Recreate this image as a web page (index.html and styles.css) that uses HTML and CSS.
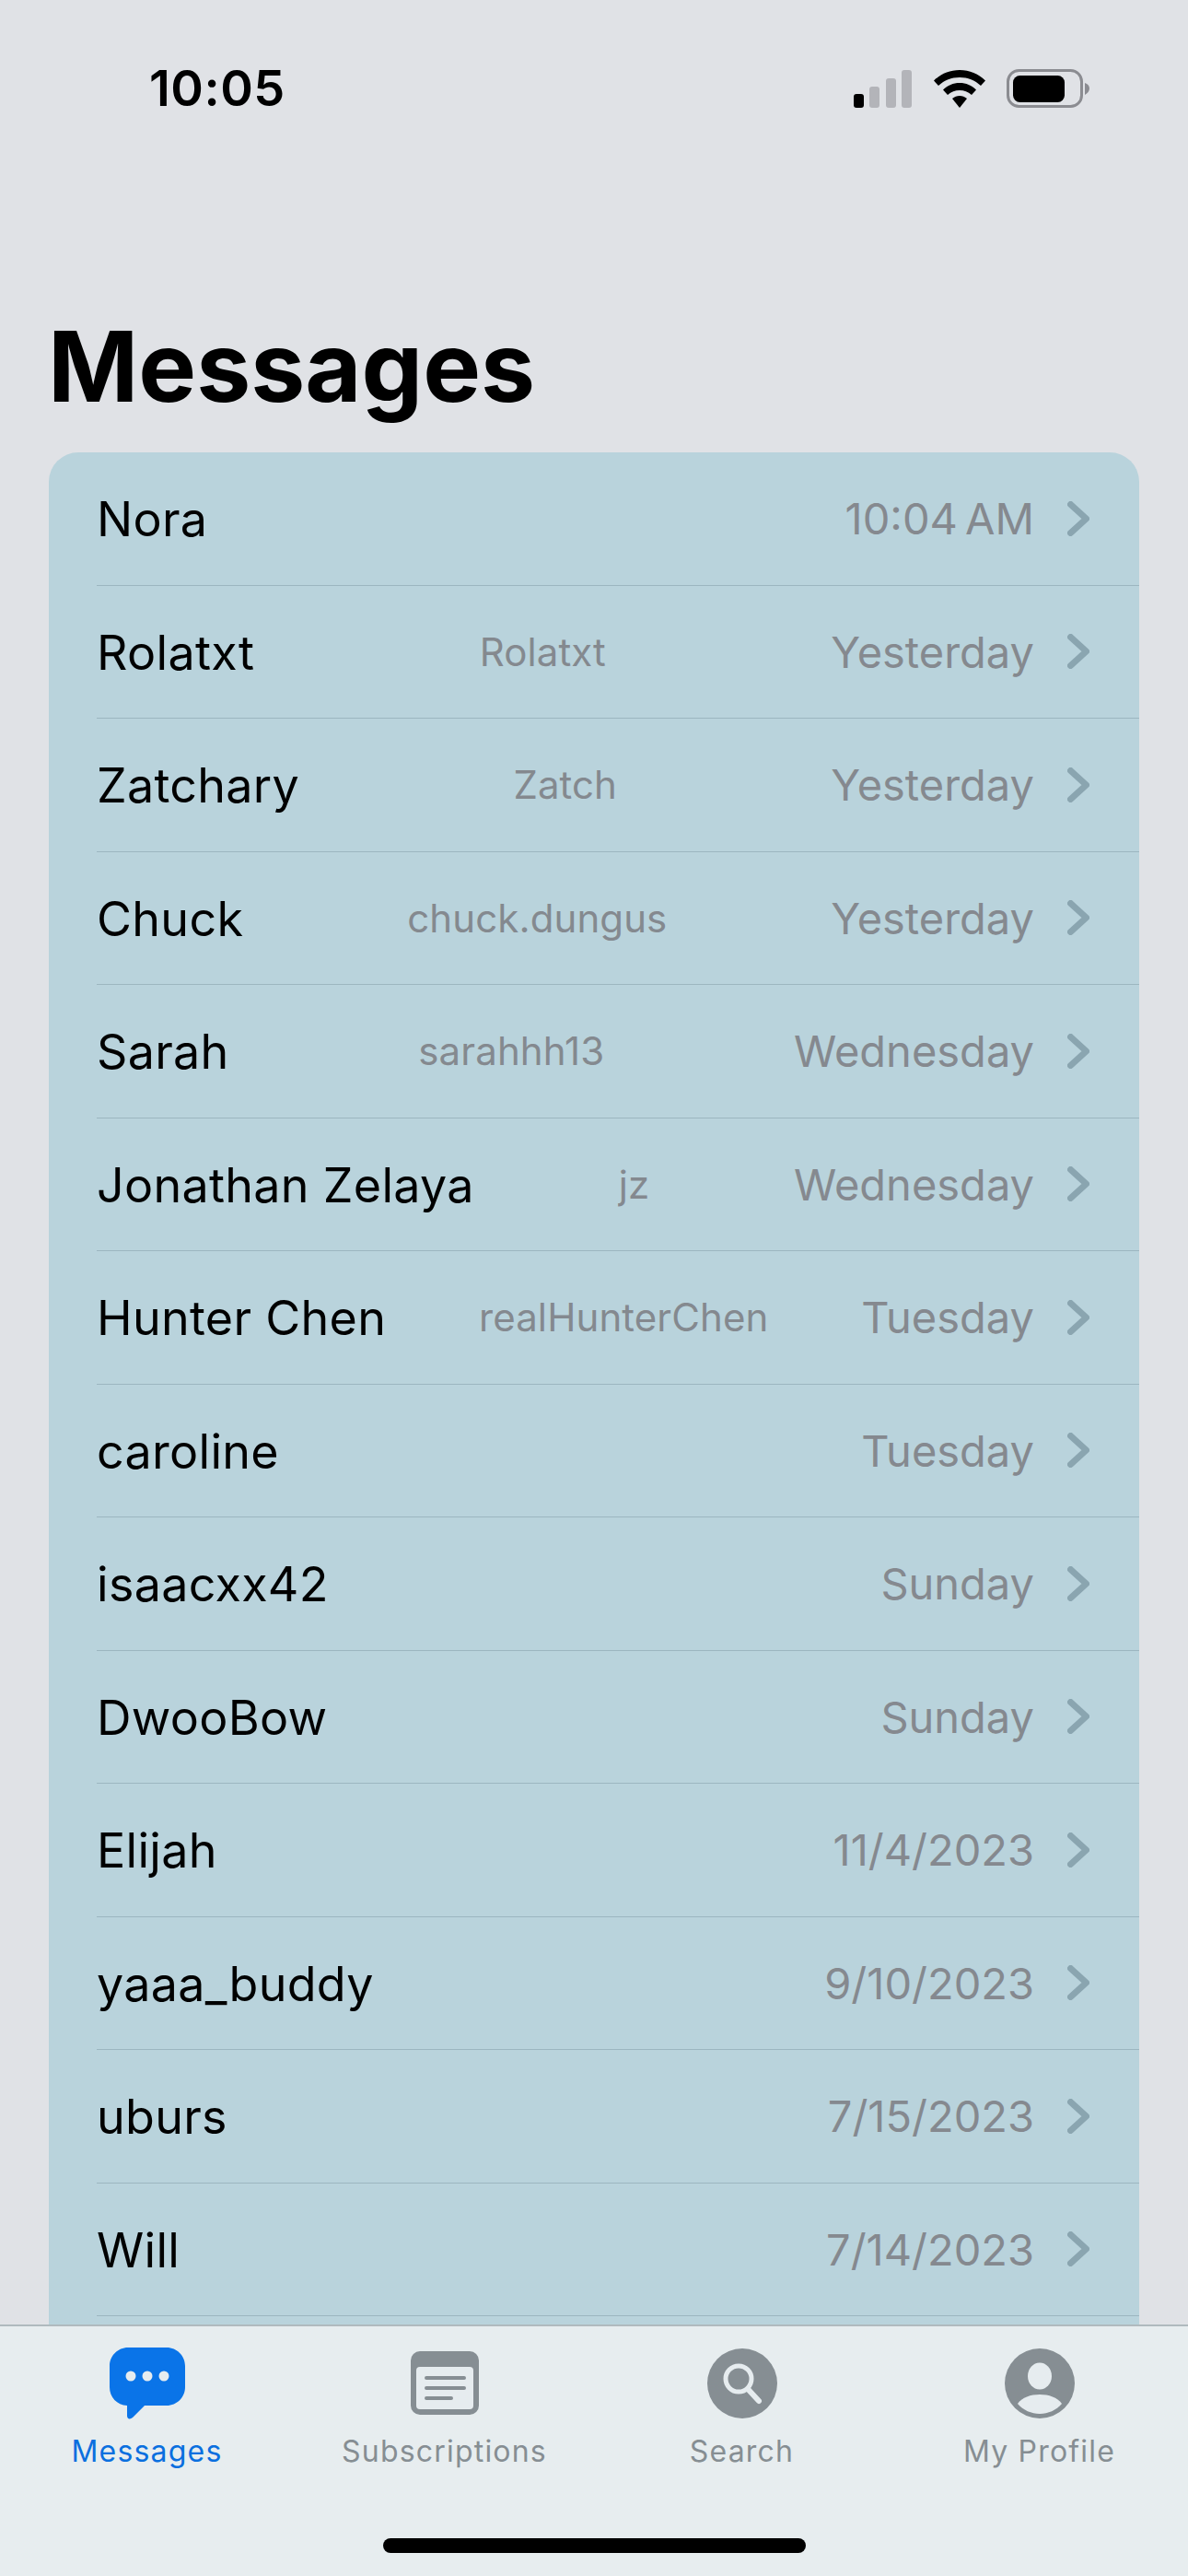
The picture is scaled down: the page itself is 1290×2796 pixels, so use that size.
FILE: index.html
```html
<!DOCTYPE html>
<html lang="en">
<head>
    <meta charset="UTF-8">
    <meta name="viewport" content="width=device-width, initial-scale=1.0">
    <title>Messages</title>
    <link rel="stylesheet" href="styles.css">
</head>
<body>

<div class="screen">
    <!-- Status bar -->
    <div class="status-bar">
        <span class="clock">10:05</span>
        <div class="status-icons">
            <svg class="signal" width="64" height="41" viewBox="0 0 64 41">
                <rect x="0" y="26" width="11" height="15" rx="3" fill="#000"/>
                <rect x="17" y="18" width="11" height="23" rx="3" fill="#b3b4b9"/>
                <rect x="35" y="9" width="11" height="32" rx="3" fill="#b3b4b9"/>
                <rect x="52" y="0" width="11" height="41" rx="3" fill="#b3b4b9"/>
            </svg>
            <svg class="wifi" width="56" height="41" viewBox="0 0 56 41">
                <path d="M28 0C17 0 8 4 0 11.500L5 17C11.500 11 19 8 28 8C37 8 44.500 11 51 17L56 11.500C48 4 39 0 28 0Z" fill="#000"/>
                <path d="M28 14C21 14 15 16.500 10 21.500L15 27C19 23.500 23 22 28 22C33 22 37 23.500 41 27L46 21.500C41 16.500 35 14 28 14Z" fill="#000"/>
                <path d="M28 28C25 28 22.500 29 20 31L28 41L36 31C33.500 29 31 28 28 28Z" fill="#000"/>
            </svg>
            <svg class="battery" width="90" height="42" viewBox="0 0 90 42">
                <rect x="1.500" y="1.500" width="80" height="39" rx="12" fill="none" stroke="#8b8c91" stroke-width="3"/>
                <rect x="7" y="7" width="56" height="29" rx="7.500" fill="#000"/>
                <path d="M85 15C88 16 90 18 90 21C90 24 88 26 85 28Z" fill="#8b8c91"/>
            </svg>
        </div>
    </div>

    <h1 class="page-title">Messages</h1>

    <!-- Daftar percakapan -->
    <ul class="message-list">
        <li class="row"><div class="row-text"><span class="name">Nora</span><span class="date">10:04 AM</span></div><svg class="chevron" width="24" height="38" viewBox="0 0 24 38"><path d="M3.500 3.500L20.500 19L3.500 34.500"/></svg></li>
        <li class="row"><div class="row-text"><span class="name">Rolatxt</span><span class="handle">Rolatxt</span><span class="date">Yesterday</span></div><svg class="chevron" width="24" height="38" viewBox="0 0 24 38"><path d="M3.500 3.500L20.500 19L3.500 34.500"/></svg></li>
        <li class="row"><div class="row-text"><span class="name">Zatchary</span><span class="handle">Zatch</span><span class="date">Yesterday</span></div><svg class="chevron" width="24" height="38" viewBox="0 0 24 38"><path d="M3.500 3.500L20.500 19L3.500 34.500"/></svg></li>
        <li class="row"><div class="row-text"><span class="name">Chuck</span><span class="handle">chuck.dungus</span><span class="date">Yesterday</span></div><svg class="chevron" width="24" height="38" viewBox="0 0 24 38"><path d="M3.500 3.500L20.500 19L3.500 34.500"/></svg></li>
        <li class="row"><div class="row-text"><span class="name">Sarah</span><span class="handle">sarahhh13</span><span class="date">Wednesday</span></div><svg class="chevron" width="24" height="38" viewBox="0 0 24 38"><path d="M3.500 3.500L20.500 19L3.500 34.500"/></svg></li>
        <li class="row"><div class="row-text"><span class="name">Jonathan Zelaya</span><span class="handle">jz</span><span class="date">Wednesday</span></div><svg class="chevron" width="24" height="38" viewBox="0 0 24 38"><path d="M3.500 3.500L20.500 19L3.500 34.500"/></svg></li>
        <li class="row"><div class="row-text"><span class="name">Hunter Chen</span><span class="handle">realHunterChen</span><span class="date">Tuesday</span></div><svg class="chevron" width="24" height="38" viewBox="0 0 24 38"><path d="M3.500 3.500L20.500 19L3.500 34.500"/></svg></li>
        <li class="row"><div class="row-text"><span class="name">caroline</span><span class="date">Tuesday</span></div><svg class="chevron" width="24" height="38" viewBox="0 0 24 38"><path d="M3.500 3.500L20.500 19L3.500 34.500"/></svg></li>
        <li class="row"><div class="row-text"><span class="name">isaacxx42</span><span class="date">Sunday</span></div><svg class="chevron" width="24" height="38" viewBox="0 0 24 38"><path d="M3.500 3.500L20.500 19L3.500 34.500"/></svg></li>
        <li class="row"><div class="row-text"><span class="name">DwooBow</span><span class="date">Sunday</span></div><svg class="chevron" width="24" height="38" viewBox="0 0 24 38"><path d="M3.500 3.500L20.500 19L3.500 34.500"/></svg></li>
        <li class="row"><div class="row-text"><span class="name">Elijah</span><span class="date">11/4/2023</span></div><svg class="chevron" width="24" height="38" viewBox="0 0 24 38"><path d="M3.500 3.500L20.500 19L3.500 34.500"/></svg></li>
        <li class="row"><div class="row-text"><span class="name">yaaa_buddy</span><span class="date">9/10/2023</span></div><svg class="chevron" width="24" height="38" viewBox="0 0 24 38"><path d="M3.500 3.500L20.500 19L3.500 34.500"/></svg></li>
        <li class="row"><div class="row-text"><span class="name">uburs</span><span class="date">7/15/2023</span></div><svg class="chevron" width="24" height="38" viewBox="0 0 24 38"><path d="M3.500 3.500L20.500 19L3.500 34.500"/></svg></li>
        <li class="row"><div class="row-text"><span class="name">Will</span><span class="date">7/14/2023</span></div><svg class="chevron" width="24" height="38" viewBox="0 0 24 38"><path d="M3.500 3.500L20.500 19L3.500 34.500"/></svg></li>
    </ul>

    <!-- Tab bar -->
    <nav class="tab-bar">
        <div class="tabs">
            <div class="tab tab-active">
                <div class="tab-icon">
                    <svg width="82" height="78" viewBox="0 0 82 78">
                        <path d="M20 0H62C73 0 82 9 82 20V43C82 54 73 63 62 63H38L25 76C22 78.500 19 77.500 19 74V63C8 62.500 0 54 0 43V20C0 9 9 0 20 0Z" fill="#0a74e8"/>
                        <circle cx="23" cy="31" r="5.500" fill="#e6ecef"/>
                        <circle cx="41" cy="31" r="5.500" fill="#e6ecef"/>
                        <circle cx="59" cy="31" r="5.500" fill="#e6ecef"/>
                    </svg>
                </div>
                <span class="tab-label">Messages</span>
            </div>
            <div class="tab">
                <div class="tab-icon">
                    <svg width="74" height="70" viewBox="0 0 74 70">
                        <rect width="74" height="69" rx="10" fill="#868e93"/>
                        <rect x="6" y="17" width="62" height="46" rx="4" fill="#e6ecef"/>
                        <path d="M17 29H58M17 40H58M17 51H44" stroke="#868e93" stroke-width="4" stroke-linecap="round"/>
                    </svg>
                </div>
                <span class="tab-label">Subscriptions</span>
            </div>
            <div class="tab">
                <div class="tab-icon">
                    <svg width="76" height="76" viewBox="0 0 76 76">
                        <circle cx="38" cy="38" r="38" fill="#868e93"/>
                        <circle cx="34" cy="33" r="14" fill="none" stroke="#e6ecef" stroke-width="5"/>
                        <path d="M44 44L56 57" stroke="#e6ecef" stroke-width="6" stroke-linecap="round"/>
                    </svg>
                </div>
                <span class="tab-label">Search</span>
            </div>
            <div class="tab">
                <div class="tab-icon">
                    <svg width="76" height="76" viewBox="0 0 76 76">
                        <circle cx="38" cy="38" r="38" fill="#868e93"/>
                        <ellipse cx="38" cy="30" rx="13" ry="14.500" fill="#e6ecef"/>
                        <path d="M14 60C19 53 28 50 38 50C48 50 57 53 62 60C56 67 47 71 38 71C29 71 20 67 14 60Z" fill="#e6ecef"/>
                    </svg>
                </div>
                <span class="tab-label">My Profile</span>
            </div>
        </div>
        <div class="home-indicator"></div>
    </nav>
</div>

</body>
</html>
```

FILE: styles.css
```css
/* Reset dan dasar */
* {
    margin: 0;
    padding: 0;
    box-sizing: border-box;
}

body {
    font-family: Inter, "Liberation Sans", sans-serif;
    background-color: #e0e2e6;
    color: #000;
}

.screen {
    display: flex;
    flex-direction: column;
    height: 2796px;
    overflow: hidden;
}

/* Status bar */
.status-bar {
    display: flex;
    justify-content: space-between;
    align-items: center;
    height: 42px;
    margin-top: 75px;
    padding: 0 107px 0 162px;
    flex-shrink: 0;
}

.clock {
    font-size: 54px;
    font-weight: 600;
    line-height: 42px;
    letter-spacing: 0.5px;
}

.status-icons {
    display: flex;
    align-items: center;
    gap: 23px;
}

.page-title {
    flex-shrink: 0;
    margin-top: 222px;
    padding-left: 52px;
    height: 152px;
    font-size: 105.5px;
    font-weight: 700;
    line-height: 118px;
}

/* Daftar pesan */
.message-list {
    flex: 1;
    min-height: 0;
    margin: 0 53px;
    overflow: hidden;
    list-style: none;
    background-color: #b9d3dc;
    border-radius: 32px 32px 0 0;
}

.row {
    display: flex;
    align-items: center;
    height: 144.5px;
    margin-left: 52px;
    padding-right: 54px;
    border-bottom: 1.5px solid #9cb6c0;
}

.row-text {
    flex: 1;
    display: flex;
    justify-content: space-between;
    align-items: center;
    margin-right: 36px;
}

.name {
    padding-top: 2px;
    font-size: 52px;
    letter-spacing: 0.3px;
}

.handle {
    font-size: 42px;
    letter-spacing: 0.1px;
    color: #84898f;
}

.date {
    font-size: 47px;
    word-spacing: -5px;
    color: #85898f;
}

.chevron {
    flex-shrink: 0;
    fill: none;
    stroke: #8aa5b0;
    stroke-width: 7;
    stroke-linecap: round;
    stroke-linejoin: round;
}

/* Tab bar */
.tab-bar {
    flex-shrink: 0;
    height: 273px;
    background-color: #e7edef;
    border-top: 2px solid #b0babe;
}

.tabs {
    display: grid;
    grid-template-columns: repeat(4, 323px);
    height: 230px;
    margin-left: -2px;
}

.tab {
    display: flex;
    flex-direction: column;
    align-items: center;
    padding-top: 22px;
    color: #868e93;
}

.tab-active {
    color: #0a6fdf;
}

.tab-icon {
    display: flex;
    justify-content: center;
    align-items: center;
    height: 80px;
}

.tab-label {
    margin-top: 14px;
    font-size: 32px;
    line-height: 40px;
    letter-spacing: 1.2px;
}

.home-indicator {
    width: 459px;
    height: 16px;
    margin: 0 auto;
    background-color: #000;
    border-radius: 8px;
}
```
